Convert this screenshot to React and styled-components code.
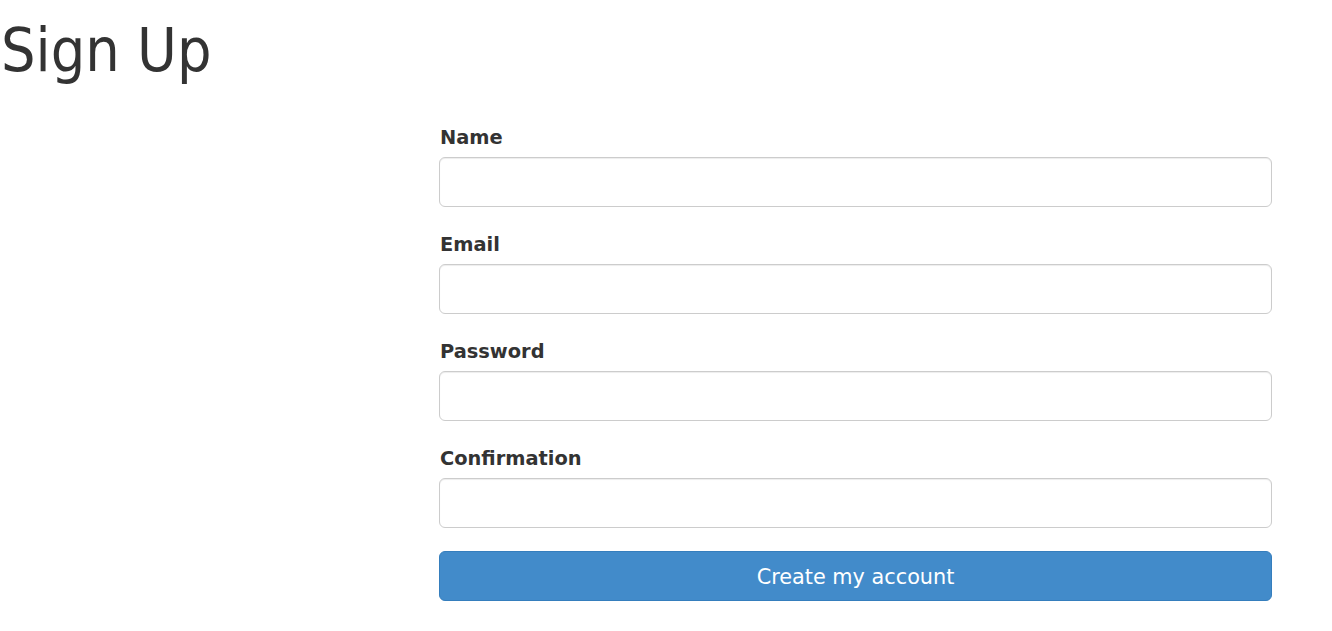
import React from "react";
import styled, { createGlobalStyle } from "styled-components";

const Global = createGlobalStyle`
  html, body { margin: 0; padding: 0; background: #fff; }
  body { font-family: "DejaVu Sans", Verdana, sans-serif; color: #333; }
  * { box-sizing: border-box; }
`;

const Page = styled.div`
  width: 1332px;
  display: flex;
  flex-direction: column;
`;

const Title = styled.h1`
  margin: 17px 0 0 0;
  padding-left: 1px;
  font-family: "DejaVu Sans Condensed", "DejaVu Sans", sans-serif;
  font-stretch: condensed;
  font-weight: normal;
  font-size: 60.5px;
  line-height: 66px;
  color: #333;
`;

const Row = styled.div`
  display: grid;
  grid-template-columns: 439px 833px;
  margin-top: 41px;
`;

const Form = styled.form`
  grid-column: 2;
  display: flex;
  flex-direction: column;
`;

const Group = styled.div`
  display: flex;
  flex-direction: column;
  margin-bottom: 24px;
`;

const Label = styled.label`
  font-weight: bold;
  font-size: 19.4px;
  line-height: 26px;
  padding-top: 1px;
  margin-bottom: 6px;
  padding-left: 1px;
  color: #333;
`;

const Input = styled.input`
  height: 50px;
  width: 100%;
  border: 1px solid #ccc;
  border-radius: 6px;
  box-shadow: inset 0 1px 1px rgba(0, 0, 0, 0.075);
  padding: 10px 16px;
  font-size: 18px;
  font-family: inherit;
  outline: none;
`;

const Button = styled.button`
  margin-top: -1px;
  height: 50px;
  width: 100%;
  padding: 2px 0 0 0;
  background: #428bca;
  border: 1px solid #357ebd;
  border-radius: 6px;
  color: #fff;
  font-family: "DejaVu Sans", Verdana, sans-serif;
  font-size: 20.8px;
  cursor: pointer;
`;

const fields = [
  { id: "name", label: "Name", type: "text" },
  { id: "email", label: "Email", type: "email" },
  { id: "password", label: "Password", type: "password" },
  { id: "confirmation", label: "Confirmation", type: "password" },
];

export default function App() {
  return (
    <>
      <Global />
      <Page>
        <Title>Sign Up</Title>
        <Row>
          <Form onSubmit={(e) => e.preventDefault()}>
            {fields.map((f) => (
              <Group key={f.id}>
                <Label htmlFor={f.id}>{f.label}</Label>
                <Input id={f.id} type={f.type} />
              </Group>
            ))}
            <Button type="submit">Create my account</Button>
          </Form>
        </Row>
      </Page>
    </>
  );
}
